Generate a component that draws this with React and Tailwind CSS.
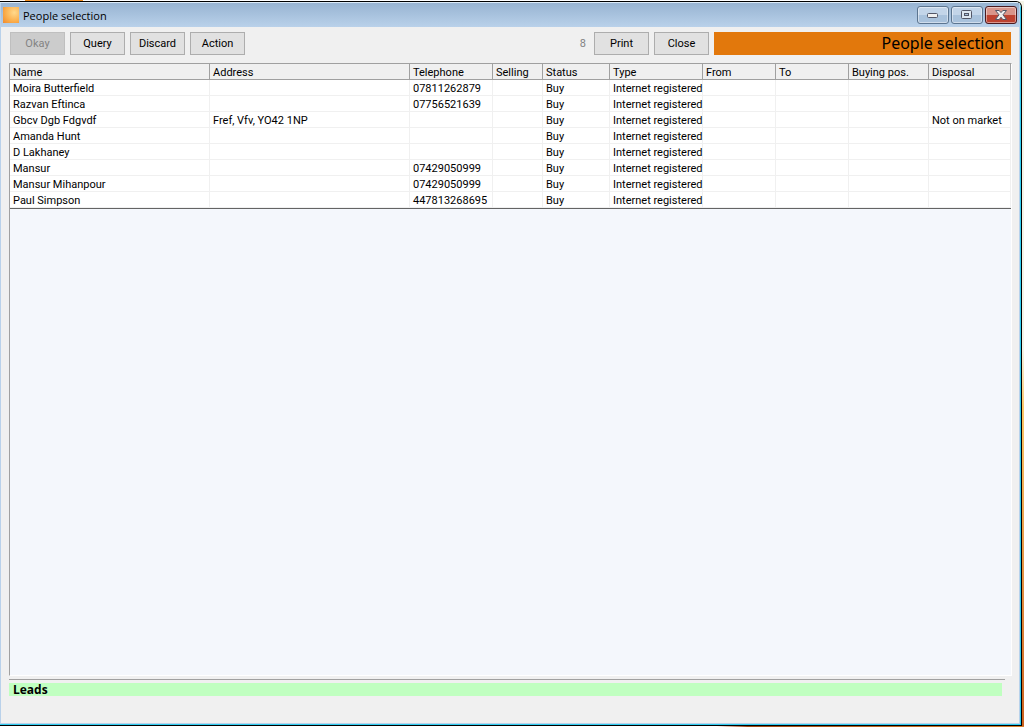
const columns = [
  { key: "name", label: "Name", width: "w-[200px]" },
  { key: "address", label: "Address", width: "w-[200px]" },
  { key: "telephone", label: "Telephone", width: "w-[83px]" },
  { key: "selling", label: "Selling", width: "w-[50px]" },
  { key: "status", label: "Status", width: "w-[67px]" },
  { key: "type", label: "Type", width: "w-[93px]" },
  { key: "from", label: "From", width: "w-[73px]" },
  { key: "to", label: "To", width: "w-[73px]" },
  { key: "buyingPos", label: "Buying pos.", width: "w-[80px]" },
  { key: "disposal", label: "Disposal", width: "" },
];

const people = [
  { name: "Moira Butterfield", telephone: "07811262879" },
  { name: "Razvan Eftinca", telephone: "07756521639" },
  { name: "Gbcv Dgb Fdgvdf", address: "Fref, Vfv, YO42 1NP", disposal: "Not on market" },
  { name: "Amanda Hunt" },
  { name: "D Lakhaney" },
  { name: "Mansur", telephone: "07429050999" },
  { name: "Mansur Mihanpour", telephone: "07429050999" },
  { name: "Paul Simpson", telephone: "447813268695" },
].map((p) => ({ status: "Buy", type: "Internet registered", ...p }));

function ToolButton({ children, disabled }) {
  return (
    <button
      type="button"
      disabled={disabled}
      className="h-[23px] w-[55px] border border-[#adadad] bg-[#e1e1e1] pt-0.5 text-center hover:bg-[#e5f1fb] disabled:border-[#bfbfbf] disabled:bg-[#cccccc] disabled:text-[#838383]"
    >
      {children}
    </button>
  );
}

function TitleBar() {
  const frame =
    "flex h-[18px] w-8 items-center justify-center rounded-[3px] border shadow-[inset_0_0_0_1px_rgba(255,255,255,0.45)]";
  const blue =
    "border-[#5c7590] bg-linear-to-b from-[#c3d5e9] from-50% to-[#a9c2dc] to-50%";

  return (
    <header className="flex h-6 items-center bg-linear-to-b from-[#98b4d2] to-[#b9d1ea] pr-0.5 pl-0.5">
      <span className="size-4 bg-[radial-gradient(circle_at_70%_35%,#ffd98c,#fbb04e_55%,#f08a2c)]" />
      <h1 className="ml-1 flex-1 pt-0.5 font-['Open_Sans','Noto_Sans',sans-serif] text-[11px] leading-4">
        People selection
      </h1>
      <div className="flex gap-0.5">
        <button type="button" aria-label="Minimize" className={`${frame} ${blue}`}>
          <svg width="12" height="6" viewBox="0 0 12 6">
            <rect x="0.5" y="1.5" width="10" height="4" rx="1" fill="#f0f0f0" stroke="#535666" />
          </svg>
        </button>
        <button type="button" aria-label="Maximize" className={`${frame} ${blue}`}>
          <svg width="12" height="10" viewBox="0 0 12 10">
            <rect x="0.5" y="0.5" width="10" height="8" rx="1" fill="#dfe8f1" stroke="#535666" />
            <rect x="3.5" y="3.5" width="4" height="2" fill="#a9c2dc" stroke="#535666" />
          </svg>
        </button>
        <button
          type="button"
          aria-label="Close window"
          className={`${frame} border-[#4b1a1f] bg-linear-to-b from-[#d9958a] from-50% to-[#bd4230] to-50%`}
        >
          <svg width="12" height="10" viewBox="0 0 12 10">
            <path
              d="M.5 .5h3.7L6 2.6 7.8 .5h3.7L8 4.8 11.5 9.5H7.8L6 7.2 4.2 9.5H.5L4 4.8z"
              fill="#f0f0f0"
              stroke="#535666"
              strokeWidth="1"
            />
          </svg>
        </button>
      </div>
    </header>
  );
}

function PeopleTable() {
  return (
    <table className="w-full table-fixed border-separate border-spacing-0 border-b border-[#646464] bg-white text-left">
      <thead>
        <tr className="bg-[#f0f0f0]">
          {columns.map((c) => (
            <th
              key={c.key}
              scope="col"
              className={`${c.width} border-r border-b border-[#a0a0a0] p-0 pt-0.5 pl-[3px] leading-[13px] font-normal`}
            >
              {c.label}
            </th>
          ))}
        </tr>
      </thead>
      <tbody>
        {people.map((p) => (
          <tr key={p.name}>
            {columns.map((c) => (
              <td
                key={c.key}
                className="h-4 border-r border-b border-[#f0f0f0] p-0 pt-0.5 pl-[3px] leading-[13px] whitespace-nowrap"
              >
                {p[c.key]}
              </td>
            ))}
          </tr>
        ))}
      </tbody>
    </table>
  );
}

export default function App() {
  return (
    <div className="flex h-screen flex-col bg-linear-to-b from-[#f4f4e8] from-48% via-[#fbc766] via-56% to-[#c9601c] font-[Roboto,'Liberation_Sans',sans-serif] text-[11px] text-black">
      {/* slivers of wallpaper above and below the window */}
      <div className="flex h-px bg-white">
        <span className="ml-[25px] w-[58px] bg-[#f08c1e]" />
      </div>
      <div className="mr-0.5 min-h-0 flex-1 overflow-hidden rounded-tr-md border-t border-r border-b border-black">
        <div className="h-full rounded-tr-md border-t border-r border-b border-t-[#dcebf8] border-r-[#2fcdf0] border-b-[#2fcdf0]">
          <main className="flex h-full flex-col border-r border-b border-l border-[#b9d1ea] bg-[#f0f0f0]">
            <TitleBar />

            <div className="flex items-center gap-[5px] pt-[5px] pr-2 pl-[9px]">
              <ToolButton disabled>Okay</ToolButton>
              <ToolButton>Query</ToolButton>
              <ToolButton>Discard</ToolButton>
              <ToolButton>Action</ToolButton>
              <output className="ml-auto pt-0.5 pr-[3px] text-[#838383]">{people.length}</output>
              <ToolButton>Print</ToolButton>
              <ToolButton>Close</ToolButton>
              <h2 className="h-[23px] w-[297px] bg-[#e2780c] pr-[7px] text-right font-['Noto_Sans','Open_Sans',sans-serif] text-[16px] leading-[22px]">
                People selection
              </h2>
            </div>

            <section className="mt-2 mr-[7px] ml-2 flex-1 border-t border-r border-b border-l border-t-[#a0a0a0] border-r-white border-b-white border-l-[#a0a0a0] bg-[#f4f7fc]">
              <PeopleTable />
            </section>

            <footer className="mt-[3px] mr-3.5 mb-[27px] ml-2 border-t border-[#a0a0a0] pt-[3px] pr-[3px]">
              <div className="h-[13px] bg-[#c0ffc0] pl-1 font-['Open_Sans',sans-serif] text-[12px] leading-[13px] font-bold">
                Leads
              </div>
            </footer>
          </main>
        </div>
      </div>
      <div className="h-px bg-linear-to-r from-white from-70% via-[#a04a14] via-73% to-[#d9822b]" />
    </div>
  );
}
